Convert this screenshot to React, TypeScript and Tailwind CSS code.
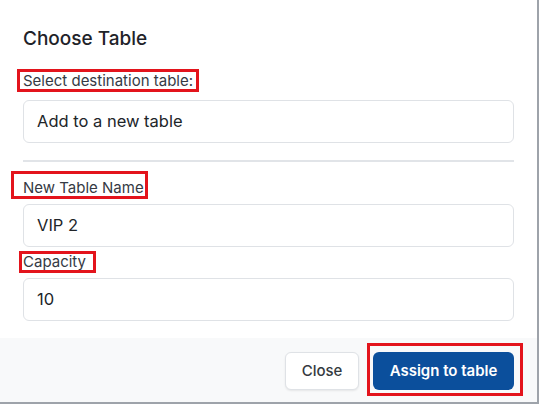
import React from "react";

const font = { fontFamily: "Inter, 'Noto Sans', sans-serif" };

export default function App() {
  return (
    <div className="relative w-[541px] h-[404px] bg-white overflow-hidden" style={font}>
      <div className="flex flex-col w-[539px] h-[404px] border-r-2 border-b-2 border-[#9ea3aa] bg-white">
        <div className="flex flex-col h-[338px] px-[23px] pt-[27px]">
          <h2 className="text-[19px] leading-[24px] font-medium text-[#1f2329]">Choose Table</h2>
          <label className="mt-[20px] text-[15px] leading-[20px] text-[#353a44]">Select destination table:</label>
          <div className="mt-[9px] h-[43px] rounded-[6px] border border-[#dfe2e6] flex items-center px-[13px] text-[16.5px] text-[#212529]">
            Add to a new table
          </div>
          <div className="mt-[17px] h-[2px] bg-[#e1e4e8]" />
          <label className="mt-[16px] text-[15px] leading-[20px] text-[#353a44]">New Table Name</label>
          <div className="mt-[6px] h-[43px] rounded-[6px] border border-[#dfe2e6] flex items-center px-[13px] text-[16.5px] text-[#212529]">
            VIP 2
          </div>
          <label className="mt-[5px] text-[15px] leading-[20px] text-[#353a44]">Capacity</label>
          <div className="mt-[6px] h-[43px] rounded-[6px] border border-[#dfe2e6] flex items-center px-[13px] text-[16.5px] text-[#212529]">
            10
          </div>
        </div>
        <div className="flex-1 bg-[#f8f9fa] flex justify-end items-start gap-[14px] px-[23px] pt-[14px]">
          <button className="h-[38px] w-[74px] rounded-[6px] bg-white border border-[#dfe2e6] shadow-[0_1px_2px_rgba(0,0,0,0.08)] text-[15px] font-medium text-[#343a40]">
            Close
          </button>
          <button className="h-[38px] w-[141px] rounded-[6px] bg-[#0b4f9c] text-[15px] font-semibold text-white">
            Assign to table
          </button>
        </div>
      </div>
      <div className="absolute left-[17px] top-[69px] w-[182px] h-[23px] border-[3px] border-[#e3141c] pointer-events-none" />
      <div className="absolute left-[11px] top-[171px] w-[137px] h-[28px] border-[3px] border-[#e3141c] pointer-events-none" />
      <div className="absolute left-[19px] top-[251px] w-[77px] h-[22px] border-[3px] border-[#e3141c] pointer-events-none" />
      <div className="absolute left-[367px] top-[343px] w-[156px] h-[53px] border-[3px] border-[#e3141c] pointer-events-none" />
    </div>
  );
}
